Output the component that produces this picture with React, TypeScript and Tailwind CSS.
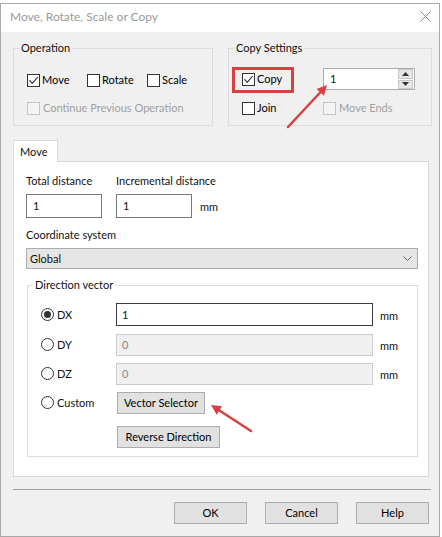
import React from "react";

function Box({ checked = false, disabled = false }: { checked?: boolean; disabled?: boolean }) {
  return (
    <span
      className={
        disabled
          ? "w-[13px] h-[13px] border border-[#c4c4c4] bg-[#f4f4f4] flex items-center justify-center shrink-0"
          : "w-[13px] h-[13px] border border-[#333333] bg-white flex items-center justify-center shrink-0"
      }
    >
      {checked && (
        <svg width="11" height="11" viewBox="0 0 11 11">
          <path d="M1.5 5.2 L4.2 8.3 L9.6 2.2" fill="none" stroke="#333" strokeWidth="1.1" />
        </svg>
      )}
    </span>
  );
}

function Radio({ checked = false }: { checked?: boolean }) {
  return (
    <span className="w-[13px] h-[13px] rounded-full border border-[#333333] bg-white flex items-center justify-center shrink-0">
      {checked && <span className="w-[7px] h-[7px] rounded-full bg-[#333333]" />}
    </span>
  );
}

function Check({ label, checked = false, disabled = false }: { label: string; checked?: boolean; disabled?: boolean }) {
  return (
    <div className="flex items-center h-[16px] whitespace-nowrap">
      <Box checked={checked} disabled={disabled} />
      <span className={disabled ? "ml-[3px] text-[#a0a0a0]" : "ml-[2px] text-black"}>{label}</span>
    </div>
  );
}

function Btn({ label, w }: { label: string; w: string }) {
  return (
    <div className={`${w} h-[22px] bg-[#e1e1e1] border border-[#adadad] flex items-center justify-center text-black whitespace-nowrap`}>
      {label}
    </div>
  );
}

export default function App() {
  return (
    <div className="w-[442px] h-[537px] bg-white pt-[3px] relative font-['Lato',sans-serif] text-[11px] leading-[16px] text-[#111]">
      <div className="w-[440px] h-[534px] border border-[#a9a9a9] flex flex-col">
        {/* title bar */}
        <div className="h-[28px] bg-white flex items-center justify-between pl-[9px] pr-[8px] shrink-0">
          <span className="text-[12px] text-[#9a9a9a] -mt-[3px]">Move, Rotate, Scale or Copy</span>
          <svg width="11" height="11" viewBox="0 0 11 11" className="-mt-[3px]">
            <path d="M0.5 0.5 L10.5 10.5 M10.5 0.5 L0.5 10.5" stroke="#8a8a8a" strokeWidth="1" />
          </svg>
        </div>

        {/* body */}
        <div className="flex-1 bg-[#f0f0f0] pl-[12px] pt-[8px] flex flex-col">
          {/* top row */}
          <div className="flex gap-[15px]">
            <fieldset className="w-[199px] h-[86px] border border-[#dcdcdc] px-[5px]">
              <legend className="px-[2px] leading-[16px]">Operation</legend>
              <div className="ml-[8px] mt-[16px] grid grid-cols-[60px_60px_60px]">
                <Check label="Move" checked />
                <Check label="Rotate" />
                <Check label="Scale" />
              </div>
              <div className="ml-[8px] mt-[12px]">
                <Check label="Continue Previous Operation" disabled />
              </div>
            </fieldset>

            <fieldset className="w-[204px] h-[86px] border border-[#dcdcdc] px-[5px]">
              <legend className="px-[2px] leading-[16px]">Copy Settings</legend>
              <div className="ml-[8px] mt-[12px] grid grid-cols-[81px_92px] items-center">
                <Check label="Copy" checked />
                <div className="h-[22px] w-[92px] bg-white border border-[#abadb3] flex items-center">
                  <span className="flex-1 pl-[6px]">1</span>
                  <div className="w-[16px] h-[20px] flex flex-col gap-[1px] pr-[1px]">
                    <div className="flex-1 bg-[#e6e6e6] border border-[#c7c7c7] flex items-center justify-center">
                      <svg width="7" height="4" viewBox="0 0 7 4"><path d="M0 4 L3.5 0 L7 4 Z" fill="#333" /></svg>
                    </div>
                    <div className="flex-1 bg-[#e6e6e6] border border-[#c7c7c7] flex items-center justify-center">
                      <svg width="7" height="4" viewBox="0 0 7 4"><path d="M0 0 L3.5 4 L7 0 Z" fill="#333" /></svg>
                    </div>
                  </div>
                </div>
              </div>
              <div className="ml-[8px] mt-[10px] grid grid-cols-[81px_92px]">
                <Check label="Join" />
                <Check label="Move Ends" disabled />
              </div>
            </fieldset>
          </div>

          {/* tab */}
          <div className="mt-[14px] relative z-10 w-[45px] h-[22px] bg-white border-t border-l border-r border-[#d9d9d9] -mb-[1px] pl-[6px] flex items-center">
            Move
          </div>
          <div className="w-[416px] h-[316px] bg-white border border-[#d9d9d9] pl-[12px] pt-[11px]">
            <div className="flex whitespace-nowrap">
              <div className="w-[90px]">
                <div>Total distance</div>
                <div className="mt-[5px] w-[76px] h-[24px] border border-[#7a7a7a] bg-white flex items-center pl-[6px]">1</div>
              </div>
              <div className="w-[84px]">
                <div>Incremental distance</div>
                <div className="mt-[5px] w-[76px] h-[24px] border border-[#7a7a7a] bg-white flex items-center pl-[6px]">1</div>
              </div>
              <div className="pt-[26px]">mm</div>
            </div>

            <div className="mt-[9px]">Coordinate system</div>
            <div className="mt-[5px] w-[392px] h-[21px] bg-[#e5e5e5] border border-[#acacac] flex items-center justify-between pl-[3px] pr-[5px]">
              <span>Global</span>
              <svg width="9" height="6" viewBox="0 0 9 6"><path d="M0.5 0.5 L4.5 4.5 L8.5 0.5" fill="none" stroke="#666" strokeWidth="1" /></svg>
            </div>

            <fieldset className="mt-[8px] ml-[1px] w-[391px] h-[180px] border border-[#dcdcdc] px-[5px]">
              <legend className="px-[2px] leading-[16px]">Direction vector</legend>
              <div className="ml-[8px] mt-[10px] flex flex-col">
                <div className="flex items-center h-[23px]">
                  <div className="w-[75px] flex items-center"><Radio checked /><span className="ml-[3px]">DX</span></div>
                  <div className="w-[257px] h-[23px] border border-[#3c3c3c] bg-white flex items-center pl-[5px]">1</div>
                  <span className="ml-[7px] mt-[2px]">mm</span>
                </div>
                <div className="flex items-center h-[23px] mt-[7px]">
                  <div className="w-[75px] flex items-center"><Radio /><span className="ml-[3px]">DY</span></div>
                  <div className="w-[257px] h-[22px] border border-[#cccccc] bg-[#f0f0f0] flex items-center pl-[5px] text-[#8a8a8a]">0</div>
                  <span className="ml-[7px] mt-[2px]">mm</span>
                </div>
                <div className="flex items-center h-[23px] mt-[6px]">
                  <div className="w-[75px] flex items-center"><Radio /><span className="ml-[3px]">DZ</span></div>
                  <div className="w-[257px] h-[22px] border border-[#cccccc] bg-[#f0f0f0] flex items-center pl-[5px] text-[#8a8a8a]">0</div>
                  <span className="ml-[7px] mt-[2px]">mm</span>
                </div>
                <div className="flex items-center h-[21px] mt-[7px]">
                  <div className="w-[76px] flex items-center"><Radio /><span className="ml-[3px]">Custom</span></div>
                  <Btn label="Vector Selector" w="w-[88px]" />
                </div>
                <div className="flex mt-[13px] pl-[76px]">
                  <Btn label="Reverse Direction" w="w-[103px]" />
                </div>
              </div>
            </fieldset>
          </div>

          {/* separator */}
          <div className="mt-[12px] w-[418px] h-[1px] bg-[#a0a0a0]" />
          <div className="mt-[12px] flex justify-end gap-[18px] w-[416px]">
            <Btn label="OK" w="w-[73px]" />
            <Btn label="Cancel" w="w-[73px]" />
            <Btn label="Help" w="w-[73px]" />
          </div>
        </div>
      </div>

      {/* annotations */}
      <div className="absolute left-[232px] top-[67px] w-[62px] h-[26px] border-[3px] border-[#d9403f]" />
      <svg className="absolute left-0 top-0 pointer-events-none" width="442" height="537" viewBox="0 0 442 537">
        <line x1="288" y1="127" x2="322" y2="90.5" stroke="#d9403f" strokeWidth="2.5" strokeLinecap="round" />
        <polygon points="327,85 323.9,95.7 316.5,88.9" fill="#d9403f" />
        <line x1="251" y1="431" x2="216" y2="408.3" stroke="#d9403f" strokeWidth="2.5" strokeLinecap="round" />
        <polygon points="211,405 222.1,406.3 216.7,414.7" fill="#d9403f" />
      </svg>
    </div>
  );
}
